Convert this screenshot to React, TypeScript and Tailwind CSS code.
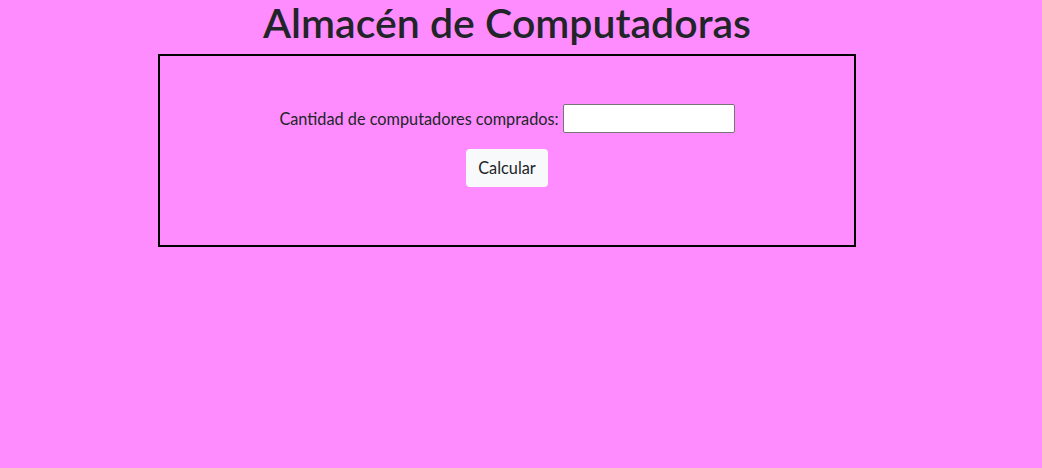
import React from "react";

export default function App() {
  return (
    <div
      className="min-h-screen w-full bg-[#ff8cff] text-[#212529]"
      style={{ fontFamily: '"Segoe UI", Lato, "Noto Sans", sans-serif' }}
    >
      <div className="w-[1014px]">
        <h1 className="text-center text-[41px] font-semibold leading-[46px] mb-2">
          Almacén de Computadoras
        </h1>
        <div className="mx-auto w-[698px] border-2 border-black pt-12 pb-[58px] flex flex-col items-center">
          <div className="flex items-center gap-1 text-[16.3px] leading-6">
            <label>Cantidad de computadores comprados:</label>
            <input
              type="text"
              className="w-[172px] h-[29px] bg-white border border-[#767676] rounded-[2px]"
            />
          </div>
          <button className="mt-4 h-[38px] px-3 bg-[#f8f9fa] rounded-[4px] text-[16.3px] leading-6 text-[#212529]">
            Calcular
          </button>
        </div>
      </div>
    </div>
  );
}
